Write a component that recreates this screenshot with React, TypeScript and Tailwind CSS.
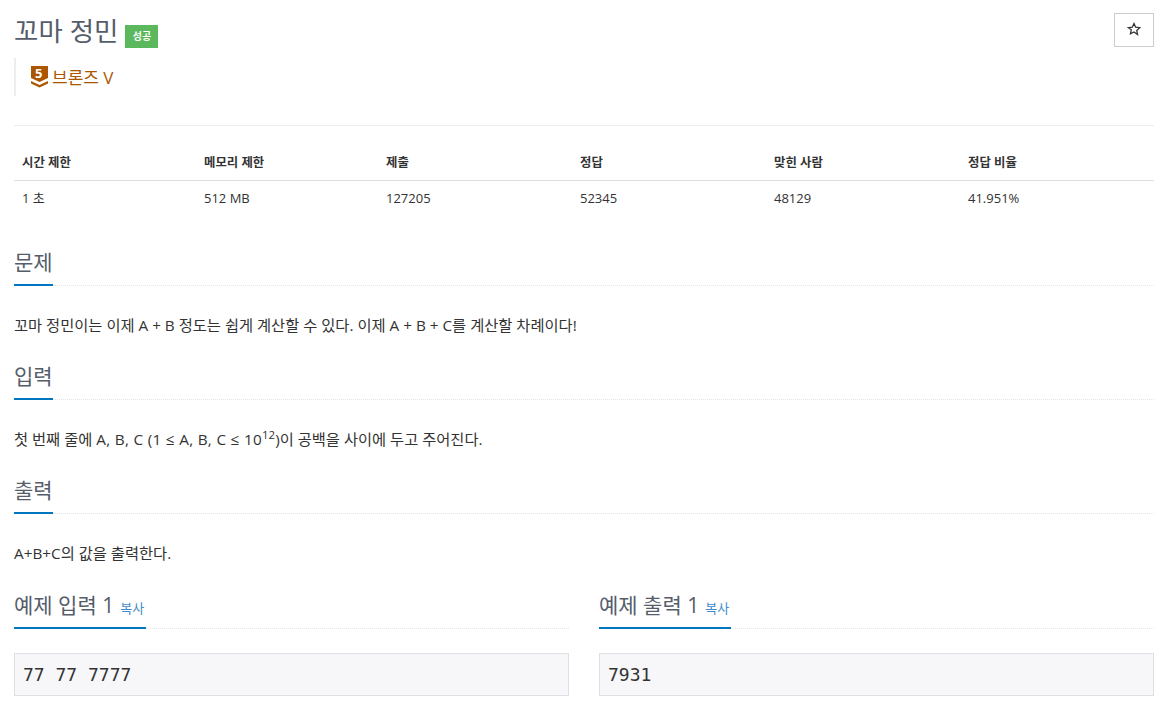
import React from 'react';

const sans = "[font-family:'Open_Sans','Noto_Sans_CJK_KR',sans-serif]";

const Headline: React.FC<{ title: string; copy?: boolean }> = ({ title, copy }) => (
  <div className="border-b border-dotted border-[#e5e5e5] h-[39px]">
    <div className="inline-block h-[39px] border-b-2 border-[#0076c0]">
      <span className="text-[21px] leading-[30px] text-[#555d6b]">{title}</span>
      {copy && <span className="ml-[6px] mr-[2px] text-[13px] text-[#428bca]">복사</span>}
    </div>
  </div>
);

const Section: React.FC<{ title: string; children: React.ReactNode }> = ({ title, children }) => (
  <section>
    <Headline title={title} />
    <p className="mt-[29px] text-[15.3px] leading-[20px] text-[#333]">{children}</p>
  </section>
);

const Sample: React.FC<{ title: string; value: string }> = ({ title, value }) => (
  <div className="flex-1">
    <Headline title={title} copy />
    <pre className="mt-[24px] h-[43px] border border-[#dfe0e6] bg-[#f7f7f9] px-[8px] text-[18px] leading-[41px] text-[#333] [font-family:'DejaVu_Sans_Mono',monospace]">
      {value}
    </pre>
  </div>
);

const heads = ['시간 제한', '메모리 제한', '제출', '정답', '맞힌 사람', '정답 비율'];
const vals = ['1 초', '512 MB', '127205', '52345', '48129', '41.951%'];
const cols = 'grid grid-cols-[182px_182px_194px_194px_194px_194px]';

export default function App() {
  return (
    <div className={`${sans} bg-white h-[709px] overflow-hidden pl-[14px] pr-[16px] pt-[13px] text-[#333]`}>
      <div className="flex items-start justify-between">
        <div className="flex items-end">
          <h1 className="text-[26.5px] leading-[36px] text-[#555d6b]">꼬마 정민</h1>
          <span className="ml-[7px] mb-[1px] flex h-[23px] w-[33px] items-center justify-center bg-[#5cb85c] text-[10px] font-bold text-white">
            성공
          </span>
        </div>
        <button className="flex h-[34px] w-[40px] items-center justify-center border border-[#ccc] bg-white">
          <svg className="mb-[2px] mr-[1px]" width="14" height="14" viewBox="0 0 24 24" fill="none" stroke="#333" strokeWidth="2.2">
            <path d="M12 2.5l2.9 6.4 7 .8-5.2 4.7 1.4 6.9L12 17l-6.1 3.3 1.4-6.9L2.1 9.7l7-.8z" />
          </svg>
        </button>
      </div>

      <div className="mt-[9px] flex h-[38px] items-center border-l-2 border-[#eee] pl-[15px]">
        <svg width="17" height="22" viewBox="0 0 17 22">
          <path d="M0 0h17v12l-8.500 4L0 12z" fill="#ad5600" />
          <path d="M0 15l8.500 4 8.500-4v2.500L8.500 21.500 0 17.500z" fill="#ad5600" />
        </svg>
        <span className="absolute ml-[4px] mt-[-6px] text-[13px] font-bold text-white">5</span>
        <span className="ml-[4px] mt-[2px] text-[17px] text-[#ad5600]">브론즈 V</span>
      </div>

      <div className="mt-[29px] border-t border-[#eee]" />

      <div className="mt-[20px]">
        <div className={`${cols} h-[35px] border-b border-[#ddd] text-[12.4px] font-bold`}>
          {heads.map(h => (
            <div key={h} className="px-[8px] leading-[33px] text-[#333]">
              {h}
            </div>
          ))}
        </div>
        <div className={`${cols} h-[34px] text-[13px]`}>
          {vals.map(v => (
            <div key={v} className="px-[8px] leading-[34px] text-[#333]">
              {v}
            </div>
          ))}
        </div>
      </div>

      <div className="mt-[32px] flex flex-col gap-[26px]">
        <Section title="문제">꼬마 정민이는 이제 A + B 정도는 쉽게 계산할 수 있다. 이제 A + B + C를 계산할 차례이다!</Section>
        <Section title="입력">
          첫 번째 줄에 <span className="tracking-[0.3px]">A, B, C (1 ≤ A, B, C ≤ 10</span>
          <sup>12</sup>)이 공백을 사이에 두고 주어진다.
        </Section>
        <Section title="출력">A+B+C의 값을 출력한다.</Section>
      </div>

      <div className="mt-[27px] flex gap-[30px]">
        <Sample title="예제 입력 1" value="77 77 7777" />
        <Sample title="예제 출력 1" value="7931" />
      </div>
    </div>
  );
}
